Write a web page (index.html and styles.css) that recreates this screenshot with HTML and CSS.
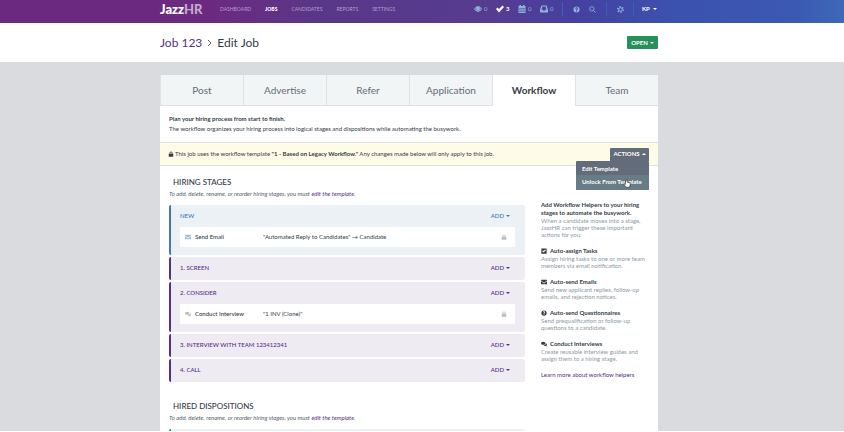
FILE: index.html
```html
<!DOCTYPE html>
<html lang="en">
<head>
<meta charset="utf-8">
<meta name="viewport" content="width=device-width, initial-scale=1">
<title>Edit Job</title>
<link rel="stylesheet" href="styles.css">
</head>
<body>
<svg class="sprite" aria-hidden="true">
  <symbol id="eye" viewBox="0 0 16 16"><path fill-rule="evenodd" d="M0 8q8-12 16 0q-8 12-16 0zM2 8q6 7 12 0q-6-7-12 0z"/><circle cx="8" cy="7.500" r="4"/></symbol>
  <symbol id="check" viewBox="0 0 16 16"><path d="M0 8l3-3 3 3 7-7 3 3-10 11z"/></symbol>
  <symbol id="calendar" viewBox="0 0 16 16"><path fill-rule="evenodd" d="M1 2h2V0h3v2h4V0h3v2h2v14H1zM3 6v2h2V6zm4 0v2h2V6zm4 0v2h2V6zM3 9v2h2V9zm4 0v2h2V9zm4 0v2h2V9zM3 12v2h2v-2zm4 0v2h2v-2zm4 0v2h2v-2z"/></symbol>
  <symbol id="inbox" viewBox="0 0 16 16"><path fill-rule="evenodd" d="M3 1h10l3 8v6H0V9zm2 2L3 9h2l1 2h4l1-2h2l-2-6z"/></symbol>
  <symbol id="help" viewBox="0 0 16 16"><path fill-rule="evenodd" d="M8 1a7 7 0 1 1 0 14A7 7 0 0 1 8 1zM5 6h2q0-1 1-1t1 1q0 1-2 2v2h2V9q2-1 2-3 0-3-3-3T5 6zm2 5v2h2v-2z"/></symbol>
  <symbol id="search" viewBox="0 0 16 16"><path fill="none" stroke="currentColor" stroke-width="2" d="M10 10l5 5M6.500 1.500a5 5 0 1 1 0 10a5 5 0 0 1 0-10z"/></symbol>
  <symbol id="gear" viewBox="0 0 16 16"><circle cx="8" cy="8" r="6" fill="none" stroke="currentColor" stroke-width="4" stroke-dasharray="3 3.280"/><circle cx="8" cy="8" r="4" fill="none" stroke="currentColor" stroke-width="2"/></symbol>
  <symbol id="lock" viewBox="0 0 16 16"><path fill-rule="evenodd" d="M2 7h2V5q0-4 4-4t4 4v2h2v8H2zm4 0h4V5q0-2-2-2T6 5z"/></symbol>
  <symbol id="mail" viewBox="0 0 16 16"><path d="M0 2h16v2L8 10 0 4zM0 6l8 6 8-6v8H0z"/></symbol>
  <symbol id="chat" viewBox="0 0 16 16"><path d="M6 2q6 0 6 4t-6 4q-1 0-2-.5L1 11l1-2.500Q0 7.500 0 6q0-4 6-4z"/><path d="M13.500 6q2.500 1.500 2.500 3.500 0 1.500-1.500 2.500l1 2.500-3-1.500q-4 .5-6-2 7 0 7-5z"/></symbol>
  <symbol id="tick" viewBox="0 0 16 16"><path fill-rule="evenodd" d="M1 1h14v14H1zM3 8l4 4 6-6-2-2-4 4-2-2z"/></symbol>
</svg>

<header class="topbar">
  <div class="wrap topbar-row">
    <a class="logo" href="#">Jazz<span>HR</span></a>
    <nav class="nav" aria-label="Main">
      <a href="#">Dashboard</a>
      <a class="current" href="#">Jobs</a>
      <a href="#">Candidates</a>
      <a href="#">Reports</a>
      <a href="#">Settings</a>
    </nav>
    <div class="tools">
      <a class="count" href="#"><svg class="icon big"><use href="#eye"/></svg>0</a>
      <a class="count lit" href="#"><svg class="icon big"><use href="#check"/></svg>3</a>
      <a class="count" href="#"><svg class="icon big"><use href="#calendar"/></svg>0</a>
      <a class="count" href="#"><svg class="icon big"><use href="#inbox"/></svg>0</a>
      <a class="tool ruled" href="#" aria-label="Help"><svg class="icon"><use href="#help"/></svg></a>
      <a class="tool" href="#" aria-label="Search"><svg class="icon"><use href="#search"/></svg></a>
      <a class="tool ruled" href="#" aria-label="Preferences"><svg class="icon"><use href="#gear"/></svg></a>
      <button class="user ruled" type="button">KP<span class="caret"></span></button>
    </div>
  </div>
</header>

<div class="titlebar">
  <div class="wrap titlebar-row">
    <h1><a href="#">Job 123</a><svg class="chevron" viewBox="0 0 5 8"><path d="M1 1l3 3-3 3"/></svg>Edit Job</h1>
    <button class="open" type="button">OPEN<span class="caret"></span></button>
  </div>
</div>

<main class="wrap">
  <div class="panel">
    <nav class="tabs" aria-label="Job sections">
      <a href="#">Post</a>
      <a href="#">Advertise</a>
      <a href="#">Refer</a>
      <a href="#">Application</a>
      <a class="active" href="#">Workflow</a>
      <a href="#">Team</a>
    </nav>

    <div class="intro">
      <strong>Plan your hiring process from start to finish.</strong>
      <p>The workflow organizes your hiring process into logical stages and dispositions while automating the busywork.</p>
    </div>

    <div class="notice">
      <svg class="icon"><use href="#lock"/></svg>
      <p>This job uses the workflow template <b>"1 - Based on Legacy Workflow."</b> Any changes made below will only apply to this job.</p>
      <div class="actions">
        <button type="button" aria-expanded="true">ACTIONS<span class="caret up"></span></button>
        <div class="menu">
          <a href="#">Edit Template</a>
          <a class="hover" href="#">Unlock From Template</a>
          <svg class="pointer" viewBox="0 0 10 12"><path d="M3 6V1.500q1-1 2 0V4l3.500 1q1 .5.800 2L8.500 11h-5L1 7.500Q1 6 3 7z"/></svg>
        </div>
      </div>
    </div>

    <div class="content">
      <div class="board">
        <h2>HIRING STAGES</h2>
        <p class="hint">To add, delete, rename, or reorder hiring stages, you must <a href="#">edit the template.</a></p>

        <section class="stage new">
          <div class="stage-head"><h3>NEW</h3><button type="button">ADD<span class="caret"></span></button></div>
          <div class="step"><svg class="icon"><use href="#mail"/></svg><b>Send Email</b><span>"Automated Reply to Candidates" → Candidate</span><svg class="icon"><use href="#lock"/></svg></div>
        </section>
        <section class="stage">
          <div class="stage-head"><h3>1. SCREEN</h3><button type="button">ADD<span class="caret"></span></button></div>
        </section>
        <section class="stage">
          <div class="stage-head"><h3>2. CONSIDER</h3><button type="button">ADD<span class="caret"></span></button></div>
          <div class="step"><svg class="icon"><use href="#chat"/></svg><b>Conduct Interview</b><span>"1 INV (Clone)"</span><svg class="icon"><use href="#lock"/></svg></div>
        </section>
        <section class="stage">
          <div class="stage-head"><h3>3. INTERVIEW WITH TEAM 123412341</h3><button type="button">ADD<span class="caret"></span></button></div>
        </section>
        <section class="stage">
          <div class="stage-head"><h3>4. CALL</h3><button type="button">ADD<span class="caret"></span></button></div>
        </section>

        <h2 class="later">HIRED DISPOSITIONS</h2>
        <p class="hint">To add, delete, rename, or reorder hiring stages, you must <a href="#">edit the template.</a></p>
        <section class="stage hired"></section>
      </div>

      <aside class="helpers">
        <h4>Add Workflow Helpers to your hiring<br>stages to automate the busywork.</h4>
        <p>When a candidate moves into a stage,<br>JazzHR can trigger these important<br>actions for you:</p>
        <h4><svg class="icon"><use href="#tick"/></svg>Auto-assign Tasks</h4>
        <p>Assign hiring tasks to one or more team<br>members via email notification.</p>
        <h4><svg class="icon"><use href="#mail"/></svg>Auto-send Emails</h4>
        <p>Send new applicant replies, follow-up<br>emails, and rejection notices.</p>
        <h4><svg class="icon"><use href="#help"/></svg>Auto-send Questionnaires</h4>
        <p>Send prequalification or follow-up<br>questions to a candidate.</p>
        <h4><svg class="icon"><use href="#chat"/></svg>Conduct Interviews</h4>
        <p>Create reusable interview guides and<br>assign them to a hiring stage.</p>
        <a href="#">Learn more about workflow helpers</a>
      </aside>
    </div>
  </div>
</main>
</body>
</html>
```

FILE: styles.css
```css
* { box-sizing: border-box; }
body {
  display: flex;
  flex-direction: column;
  margin: 0;
  height: 100vh;
  overflow: hidden;
  background: #d9dbde;
  border-bottom: 1px solid #fff;
  color: #343c48;
  font: 6px/8px Lato, "Liberation Sans", sans-serif;
}
h1, h2, h3, h4, p { margin: 0; font-size: inherit; }
a { color: inherit; text-decoration: none; }
button { border: 0; padding: 0; background: none; color: inherit; font: inherit; cursor: pointer; }
.sprite { display: none; }
.icon { width: 6px; height: 6px; fill: currentColor; flex: none; }
.icon.big { width: 8px; height: 8px; }
.wrap { padding: 0 186px 0 160px; }
.caret {
  display: inline-block;
  margin-left: 3px;
  border: 2px solid transparent;
  border-top-color: currentColor;
  border-bottom: 0;
  vertical-align: 1px;
}
.caret.up { border-top: 0; border-bottom: 2px solid currentColor; }

/* Top bar */
.topbar { background: linear-gradient(90deg, #6b2a80 0, #6b2a80 25%, #593788 38%, #563c90 58%, #4540a0 68%, #3b52ae 80%, #3b58b2 94%, #3e68b8 100%); }
.topbar-row { display: flex; align-items: flex-start; height: 23px; padding-top: 1px; }
.logo { width: 60px; color: #fff; font-size: 13px; line-height: 16px; font-weight: 900; }
.logo span { color: #c3a9cf; }
.nav { display: flex; flex: 1; gap: 14px; line-height: 16px; color: #b79cc9; font-size: 5px; text-transform: uppercase; }
.nav .current { color: #fff; font-weight: 900; }
.tools { display: flex; align-items: center; height: 16px; color: #8bb4d6; }
.count { display: flex; align-items: center; gap: 2px; width: 22px; }
.lit { color: #fff; font-weight: 700; }
.tool { display: flex; align-items: center; width: 17px; height: 14px; }
.tool .icon { width: 7px; height: 7px; }
.ruled { width: 27px; border-left: 1px solid #3f5fae; padding-left: 10px; }
.user { width: 25px; height: 14px; color: #fff; font-weight: 700; text-align: left; white-space: nowrap; padding-left: 8px; }

/* Title bar */
.titlebar { background: #fff; }
.titlebar-row { display: flex; align-items: center; justify-content: space-between; height: 39px; }
h1 { font-size: 12px; line-height: 16px; font-weight: 400; }
h1 a { color: #54308a; }
.chevron { width: 5px; height: 8px; margin: 0 5px; fill: none; stroke: #5c6470; }
.open { width: 31px; height: 13px; border-radius: 1px; background: #27905a; color: #fff; font-weight: 700; }
.open .caret { margin-left: 2px; }

/* Panel and tabs */
main { flex: 1; min-height: 0; overflow: hidden; }
.panel { margin-top: 13px; background: #fff; }
.tabs { display: grid; grid-template-columns: repeat(6, 1fr); }
.tabs a {
  height: 31px;
  border-left: 1px solid #dee2e7;
  border-bottom: 1px solid #dee2e7;
  background: #f2f5f5;
  color: #606e7b;
  font-size: 10px;
  line-height: 30px;
  text-align: center;
}
.tabs .active { background: #fff; border-bottom-color: #fff; color: #343c48; font-weight: 700; }
.intro { padding: 8px 9px; height: 36px; line-height: 10px; }
.notice {
  display: flex;
  align-items: center;
  gap: 1px;
  height: 24px;
  padding: 0 9px 0 8px;
  border-top: 1px solid #dee2e7;
  border-bottom: 1px solid #dee2e7;
  background: #fefce6;
}
.notice b { font-weight: 700; }
.actions { position: relative; margin-left: auto; color: #fff; font-weight: 700; }
.actions button { width: 39px; height: 13px; border-radius: 1px 1px 0 0; background: #636c7a; display: block; }
.actions .caret { margin-left: 2px; }
.menu { position: absolute; top: 13px; right: 0; width: 73px; background: #636c7a; border-radius: 1px; overflow: hidden; z-index: 1; }
.menu a { display: block; padding: 4px 6px 2px; white-space: nowrap; }
.menu .hover { padding: 3px 6px 4px; background: #677c86; }
.pointer { position: absolute; left: 47px; top: 18px; width: 8px; height: 9px; fill: #fff; stroke: #343c48; }

/* Stages */
.content { display: grid; grid-template-columns: 356px 1fr; gap: 16px; padding: 10px 9px; }
h2 { padding-left: 4px; font-size: 8px; line-height: 12px; font-weight: 500; }
h2.later { margin-top: 18px; }
.hint { margin: 2px 0 7px; color: #55606d; font-style: italic; }
.hint a, .helpers > a { color: #54308a; }
.stage { margin-bottom: 2px; padding: 7px 10px 8px 9px; border-left: 2px solid #54308a; border-radius: 2px; background: #efebf2; color: #54308a; }
.stage.new { border-color: #3f78bd; background: #ebf1f4; color: #3f78bd; }
.stage.hired { border-color: #27905a; background: #ebf1f4; }
.stage-head { display: flex; justify-content: space-between; padding-right: 5px; font-weight: 500; }
.stage-head .caret { margin-left: 2px; }
h3 { font-weight: 500; }
.step { display: grid; grid-template-columns: 10px 68px 1fr 6px; align-items: center; height: 20px; margin-top: 7px; padding: 0 8px 0 5px; border-radius: 1px; background: #fff; color: #343c48; }
.step b { font-weight: 500; }
.step .icon { color: #b9bdc8; }
.new .step .icon:first-child { color: #9fc0dc; }

/* Helpers */
.helpers { padding-top: 25px; color: #8b9aa6; white-space: nowrap; }
.helpers h4 { color: #343c48; font-weight: 700; }
.helpers h4 .icon { margin-right: 3px; vertical-align: -1px; }
.helpers p { margin-bottom: 9px; line-height: 7px; }
```
